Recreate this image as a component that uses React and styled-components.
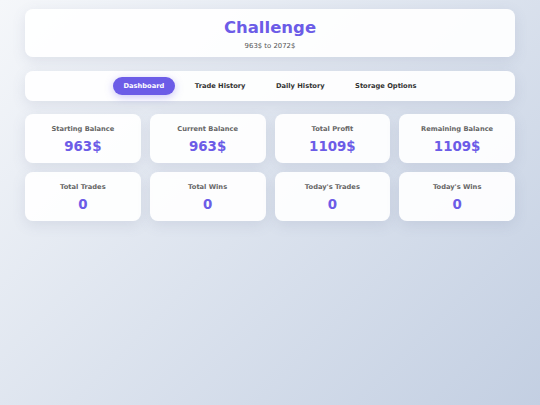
import React from "react";
import styled, { createGlobalStyle } from "styled-components";

const GlobalStyle = createGlobalStyle`
  html, body {
    margin: 0;
    padding: 0;
  }
  body {
    min-height: 100vh;
    background: linear-gradient(135deg, #f5f7fa 0%, #c3cfe2 100%);
    font-family: "DejaVu Sans", Verdana, sans-serif;
  }
`;

const Page = styled.div`
  padding: 9px 25px;
  display: flex;
  flex-direction: column;
  gap: 14px;
`;

const Card = styled.div`
  background: rgba(255, 255, 255, 0.92);
  border-radius: 8px;
  box-shadow: 0 4px 14px rgba(90, 100, 140, 0.13);
`;

const Header = styled(Card)`
  box-sizing: border-box;
  height: 48px;
  padding-top: 3px;
  display: flex;
  flex-direction: column;
  align-items: center;
  justify-content: center;
  gap: 6.5px;
`;

const Title = styled.h1`
  margin: 0;
  font-size: 16.5px;
  font-weight: bold;
  color: #6c5ce7;
  line-height: 1;
`;

const Subtitle = styled.div`
  font-size: 6.9px;
  color: #555;
  line-height: 1;
`;

const Nav = styled(Card)`
  height: 30px;
  display: flex;
  align-items: center;
  justify-content: center;
  gap: 8.5px;
`;

const NavButton = styled.button`
  border: none;
  font-family: inherit;
  font-size: 6.7px;
  font-weight: bold;
  height: 18px;
  padding: 0 11px;
  border-radius: 9px;
  cursor: pointer;
  background: ${(p) => (p.$active ? "#6c5ce7" : "transparent")};
  color: ${(p) => (p.$active ? "#fff" : "#333")};
  box-shadow: ${(p) => (p.$active ? "0 2px 8px rgba(108, 92, 231, 0.35)" : "none")};
`;

const Grid = styled.div`
  display: grid;
  grid-template-columns: repeat(4, 1fr);
  gap: 9px;
  margin-top: -1px;
`;

const Stat = styled(Card)`
  box-sizing: border-box;
  height: 49px;
  padding-top: 2px;
  display: flex;
  flex-direction: column;
  align-items: center;
  justify-content: center;
  gap: 7px;
`;

const Label = styled.div`
  font-size: 6.7px;
  font-weight: bold;
  color: #666;
  line-height: 1;
`;

const Value = styled.div`
  font-size: 13.4px;
  font-weight: bold;
  color: #6c5ce7;
  line-height: 1;
`;

const tabs = ["Dashboard", "Trade History", "Daily History", "Storage Options"];

const stats = [
  ["Starting Balance", "963$"],
  ["Current Balance", "963$"],
  ["Total Profit", "1109$"],
  ["Remaining Balance", "1109$"],
  ["Total Trades", "0"],
  ["Total Wins", "0"],
  ["Today's Trades", "0"],
  ["Today's Wins", "0"],
];

export default function App() {
  return (
    <>
      <GlobalStyle />
      <Page>
        <Header>
          <Title>Challenge</Title>
          <Subtitle>963$ to 2072$</Subtitle>
        </Header>
        <Nav>
          {tabs.map((t, i) => (
            <NavButton key={t} $active={i === 0}>
              {t}
            </NavButton>
          ))}
        </Nav>
        <Grid>
          {stats.map(([label, value]) => (
            <Stat key={label}>
              <Label>{label}</Label>
              <Value>{value}</Value>
            </Stat>
          ))}
        </Grid>
      </Page>
    </>
  );
}
